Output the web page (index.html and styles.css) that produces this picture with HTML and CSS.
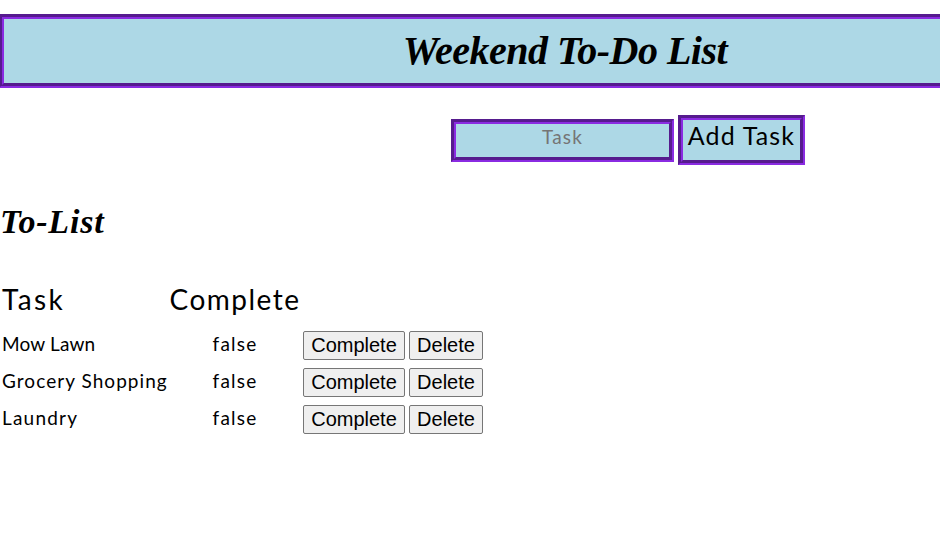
FILE: index.html
```html
<!DOCTYPE html>
<html lang="en">
<head>
<meta charset="utf-8">
<title>Weekend To-Do List</title>
<link rel="stylesheet" href="styles.css">
</head>
<body>
<header class="banner"><h1>Weekend To-Do List</h1></header>
<form class="task-form">
<input class="task-input" type="text" placeholder="Task">
<button class="add-button" type="button">Add Task</button>
</form>
<h2>To-List</h2>
<table class="tasks">
<colgroup><col class="col-task"><col class="col-status"><col class="col-actions"></colgroup>
<thead><tr><th class="name">Task</th><th>Complete</th><th></th></tr></thead>
<tbody>
<tr><td class="name mow">Mow Lawn</td><td>false</td><td class="actions"><div class="buttons"><button type="button">Complete</button><button type="button">Delete</button></div></td></tr>
<tr><td class="name grocery">Grocery Shopping</td><td>false</td><td class="actions"><div class="buttons"><button type="button">Complete</button><button type="button">Delete</button></div></td></tr>
<tr><td class="name laundry">Laundry</td><td>false</td><td class="actions"><div class="buttons"><button type="button">Complete</button><button type="button">Delete</button></div></td></tr>
</tbody>
</table>
</body>
</html>
```
FILE: styles.css
```css
* { box-sizing: border-box; }
html { overflow: hidden; }
body {
  margin: 0;
  padding-top: 14px;
  background: #fff;
  color: #000;
  font-family: Papyrus, Lato, sans-serif;
  font-size: 19px;
  overflow: hidden;
}
.banner {
  height: 74px;
  margin-left: -1px;
  padding-left: 186px;
  border: 5px groove blueviolet;
  border-right: 0;
  background: lightblue;
  text-align: center;
}
h1, h2 {
  margin: 0;
  font-family: "Apple Chancery", "Liberation Serif", serif;
  font-style: italic;
  font-weight: bold;
  white-space: nowrap;
}
h1 { font-size: 40px; line-height: 63px; letter-spacing: -0.5px; }
h2 { margin-top: 36px; font-size: 34px; line-height: 42px; letter-spacing: 0.8px; }
.task-form {
  display: flex;
  align-items: center;
  gap: 4px;
  height: 50px;
  margin: 27px 0 0 451px;
}
.task-input, .add-button {
  border: 5px groove blueviolet;
  border-radius: 0;
  background: lightblue;
  font-family: inherit;
  text-align: center;
}
.task-input {
  width: 223px;
  height: 43px;
  padding: 0 0 7px;
  font-size: 19px;
  letter-spacing: 1.2px;
}
.task-input::placeholder { color: #757575; }
.add-button {
  width: 127px;
  height: 50px;
  padding: 0 0 10px;
  color: #000;
  font-size: 25px;
  line-height: 30px;
  letter-spacing: 1.15px;
  white-space: nowrap;
}
.tasks {
  width: 485px;
  margin-top: 34px;
  border-collapse: collapse;
  table-layout: fixed;
}
.col-task { width: 169px; }
.col-status { width: 132px; }
.col-actions { width: 184px; }
th, td { padding: 0; text-align: center; white-space: nowrap; }
th {
  height: 50px;
  padding-bottom: 5px;
  font-size: 28px;
  font-weight: 400;
  line-height: 45px;
  letter-spacing: 1.5px;
}
td { height: 37px; padding-bottom: 4px; line-height: 26px; letter-spacing: 1.2px; }
.name { padding-left: 2px; text-align: left; }
th.name { letter-spacing: 2.4px; }
.mow { letter-spacing: 0.15px; }
.grocery { letter-spacing: 1.05px; }
.actions { padding-bottom: 0; }
.buttons { display: flex; gap: 4px; padding-left: 2px; }
.buttons button {
  height: 29px;
  padding: 0;
  border: 1px solid #767676;
  border-radius: 2px;
  background: #efefef;
  color: #000;
  font: 20px/27px Arial, "Liberation Sans", sans-serif;
}
.buttons button:first-child { width: 102px; }
.buttons button:last-child { width: 74px; }
```
